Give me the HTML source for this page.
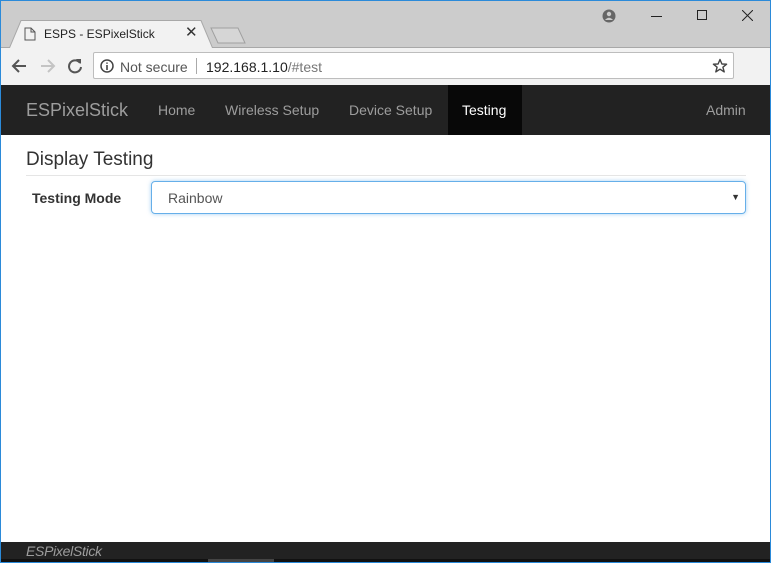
<!DOCTYPE html>
<html><head><meta charset="utf-8"><style>
*{box-sizing:border-box;margin:0;padding:0}
body{width:771px;height:563px;overflow:hidden;background:#fff;font-family:"Liberation Sans",sans-serif;position:relative}
.win{position:absolute;inset:0;border:1px solid #2b8ad9;border-top:1px solid #2b8ad9}
.title{position:absolute;left:1px;right:1px;top:1px;height:47px;background:#cccccc;border-bottom:1px solid #a8a8a8}
.tab{position:absolute;left:8px;top:19px;width:204px;height:29px;background:#f2f2f2;clip-path:polygon(0 100%,12px 0,192px 0,204px 100%);}
.tabline{position:absolute;left:8px;top:19px;width:204px;height:29px}
.newtab{position:absolute;left:209px;top:26px;width:36px;height:17px}
.toolbar{position:absolute;left:1px;right:1px;top:48px;height:37px;background:#f2f2f2}
.omni{position:absolute;left:93px;top:52px;width:641px;height:27px;background:#fff;border:1px solid #bdbdbd;border-radius:2px}
.nav{position:absolute;left:1px;right:1px;top:85px;height:50px;background:#222}
.nav span{position:absolute;top:17px;font-size:14px;color:#9d9d9d}
.active{position:absolute;left:447px;top:0;width:74px;height:50px;background:#080808}
h1{position:absolute;left:26px;top:149px;font-size:19px;font-weight:normal;color:#333}
.hr{position:absolute;left:26px;top:175px;width:720px;height:1px;background:#e5e5e5}
.lbl{position:absolute;left:32px;top:190px;font-size:14px;font-weight:bold;color:#333}
.sel{position:absolute;left:151px;top:181px;width:595px;height:33px;border:1px solid #66afe9;border-radius:4px;box-shadow:0 0 4px rgba(102,175,233,.6);font-size:14px;color:#555;padding:8px 0 0 16px}
.sel i{position:absolute;right:5px;top:10px;font-style:normal;font-size:9px;color:#333}
.foot{position:absolute;left:1px;right:1px;top:542px;height:17px;background:#222}
.foot span{position:absolute;left:25px;top:1px;font-size:14px;font-style:italic;color:#9d9d9d;letter-spacing:-0.3px}
.bot{position:absolute;left:1px;right:1px;top:559px;height:4px;background:#111}
.thumb{position:absolute;left:208px;top:559px;width:66px;height:4px;background:#444}
</style></head><body>
<div class="title">
<div class="tab"></div>
<svg class="tabline" viewBox="0 0 204 29"><path d="M0 29 L12 0.5 L192 0.5 L204 29" fill="none" stroke="#a8a8a8"/></svg>
<svg class="newtab" viewBox="0 0 36 17"><path d="M1 1 H28 L35 16 H8 Z" fill="#d6d6d6" stroke="#a0a0a0"/></svg>
<svg style="position:absolute;left:23px;top:26px" width="12" height="14" viewBox="0 0 12 14"><path d="M1 1 H7 L11 5 V13 H1 Z M7 1 V5 H11" fill="none" stroke="#555"/></svg>
<div style="position:absolute;left:43px;top:26px;font-size:12px;color:#222">ESPS - ESPixelStick</div>
<div style="position:absolute;left:184px;top:22px;font-size:15px;color:#333">✕</div>
<svg style="position:absolute;left:601px;top:8px" width="14" height="14" viewBox="0 0 14 14"><circle cx="7" cy="7" r="6.5" fill="#666"/><circle cx="7" cy="5" r="2.2" fill="#ccc"/><path d="M3 11 Q7 6.5 11 11" fill="#ccc"/></svg>
<div style="position:absolute;left:650px;top:15px;width:11px;height:1px;background:#222"></div>
<div style="position:absolute;left:696px;top:9px;width:10px;height:10px;border:1px solid #222"></div>
<svg style="position:absolute;left:741px;top:9px" width="11" height="11" viewBox="0 0 11 11"><path d="M0 0 L11 11 M11 0 L0 11" stroke="#222"/></svg>
</div>
<div class="toolbar">
<svg style="position:absolute;left:10px;top:10px" width="16" height="16" viewBox="0 0 16 16"><path d="M15 8 H2 M8 2 L2 8 L8 14" fill="none" stroke="#555" stroke-width="2"/></svg>
<svg style="position:absolute;left:39px;top:10px" width="16" height="16" viewBox="0 0 16 16"><path d="M1 8 H14 M8 2 L14 8 L8 14" fill="none" stroke="#c4c4c4" stroke-width="2"/></svg>
<svg style="position:absolute;left:66px;top:10px" width="16" height="16" viewBox="0 0 16 16"><path d="M13 5 A6 6 0 1 0 14 9" fill="none" stroke="#555" stroke-width="2"/><path d="M9 1 H14 V6 Z" fill="#555"/></svg>
<svg style="position:absolute;left:726px;top:9px" width="6" height="18" viewBox="0 0 6 18"><circle cx="3" cy="3" r="1.6" fill="#555"/><circle cx="3" cy="9" r="1.6" fill="#555"/><circle cx="3" cy="15" r="1.6" fill="#555"/></svg>
</div>
<div class="omni">
<svg style="position:absolute;left:6px;top:6px" width="14" height="14" viewBox="0 0 14 14"><circle cx="7" cy="7" r="6" fill="none" stroke="#444" stroke-width="1.5"/><path d="M7 6 V11 M7 3.5 V4.8" stroke="#444" stroke-width="1.6"/></svg>
<div style="position:absolute;left:26px;top:6px;font-size:14px;color:#555">Not secure</div>
<div style="position:absolute;left:102px;top:5px;width:1px;height:16px;background:#aaa"></div>
<div style="position:absolute;left:112px;top:6px;font-size:14px;color:#222">192.168.1.10<span style="color:#777">/#test</span></div>
<svg style="position:absolute;left:618px;top:5px" width="16" height="16" viewBox="0 0 16 16"><path d="M8 1.5 L9.9 6 L14.6 6.2 L10.9 9.2 L12.2 13.9 L8 11.2 L3.8 13.9 L5.1 9.2 L1.4 6.2 L6.1 6 Z" fill="none" stroke="#444" stroke-width="1.4" stroke-linejoin="round"/></svg>
</div>
<div class="nav">
<div class="active"></div>
<span style="left:25px;top:15px;font-size:18px">ESPixelStick</span>
<span style="left:157px">Home</span>
<span style="left:224px">Wireless Setup</span>
<span style="left:348px">Device Setup</span>
<span style="left:461px;color:#fff">Testing</span>
<span style="left:705px">Admin</span>
</div>
<h1>Display Testing</h1>
<div class="hr"></div>
<div class="lbl">Testing Mode</div>
<div class="sel">Rainbow<i>▼</i></div>
<div class="foot"><span>ESPixelStick</span></div>
<div class="bot"></div><div class="thumb"></div>
<div class="win"></div>
</body></html>
